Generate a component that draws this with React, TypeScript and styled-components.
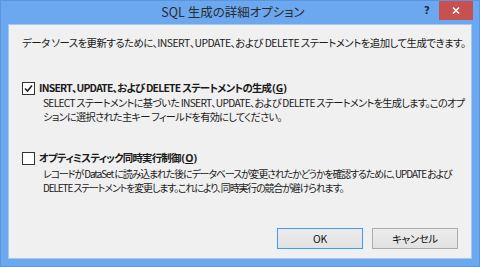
import React from "react";
import styled, { createGlobalStyle } from "styled-components";

const Global = createGlobalStyle`
  html, body { margin: 0; padding: 0; }
  body { background: #6aa7ee; }
`;

const FONT = `"Noto Sans CJK JP", "Noto Sans", sans-serif`;

const Frame = styled.div`
  width: 480px;
  height: 267px;
  box-sizing: border-box;
  background: #6ca8ef;
  border: 1px solid #5b95dc;
  display: flex;
  flex-direction: column;
  font-family: ${FONT};
  font-feature-settings: "palt";
  color: #1a1a1a;
`;

const TitleBar = styled.div`
  height: 23px;
  display: flex;
  align-items: flex-start;
  position: relative;
`;

const Title = styled.div`
  position: absolute;
  left: 0;
  right: 14px;
  top: 3px;
  text-align: center;
  font-size: 12.5px;
  line-height: 16px;
  color: #2b2b2b;
`;

const Controls = styled.div`
  margin-left: auto;
  display: flex;
  align-items: flex-start;
  margin-right: 6px;
  position: relative;
`;

const HelpButton = styled.div`
  width: 24px;
  height: 19px;
  display: flex;
  align-items: center;
  justify-content: center;
  font-family: "DejaVu Sans", sans-serif;
  font-weight: bold;
  font-size: 10px;
  color: #1c2a40;
`;

const CloseButton = styled.div`
  width: 34px;
  height: 19px;
  background: #c75050;
  display: flex;
  align-items: center;
  justify-content: center;
`;

const Client = styled.div`
  flex: 1;
  margin: 0 7px 7px 7px;
  background: #f0f0f0;
  border: 1px solid #a8c8f0;
  display: flex;
  flex-direction: column;
  padding: 10px 13px 9px 13px;
  font-size: 10.4px;
  letter-spacing: -0.5px;
`;

const Intro = styled.div`
  line-height: 16px;
  white-space: nowrap;
`;

const OptionRow = styled.label<{ $top: number }>`
  display: flex;
  align-items: center;
  gap: 4px;
  margin-top: ${(p) => p.$top}px;
  line-height: 16px;
  font-weight: bold;
  white-space: nowrap;
  letter-spacing: -0.75px;
`;

const Box = styled.span`
  width: 11px;
  height: 11px;
  border: 1px solid #333;
  background: #fff;
  display: inline-flex;
  align-items: center;
  justify-content: center;
  flex: none;
`;

const Accel = styled.span`
  font-family: "Noto Sans", sans-serif;
  letter-spacing: 0;
  margin-left: 1px;
`;

const Mnemonic = styled.span`
  text-decoration: underline;
`;

const Description = styled.div<{ $top: number; $spacing: number; $size: number }>`
  margin-top: ${(p) => p.$top}px;
  padding-left: 21px;
  line-height: 14px;
  white-space: nowrap;
  font-size: ${(p) => p.$size}px;
  letter-spacing: ${(p) => p.$spacing}px;
`;

const ButtonRow = styled.div`
  margin-top: auto;
  display: flex;
  justify-content: flex-end;
  gap: 9px;
`;

const Button = styled.button<{ $default?: boolean }>`
  width: 86px;
  height: 21px;
  box-sizing: border-box;
  font-family: ${FONT};
  font-feature-settings: "palt";
  font-size: 10.4px;
  letter-spacing: -0.3px;
  color: #111;
  background: linear-gradient(#ececec, #e2e2e2);
  border: 1px solid ${(p) => (p.$default ? "#3c9cf0" : "#acacac")};
  padding: 0;
`;

const Check = () => (
  <svg width="9" height="9" viewBox="0 0 9 9">
    <path d="M1 4.5 L3.5 7 L8 1.5" fill="none" stroke="#222" strokeWidth="1.6" />
  </svg>
);

export default function App() {
  return (
    <>
      <Global />
      <Frame>
        <TitleBar>
          <Title>SQL 生成の詳細オプション</Title>
          <Controls>
            <HelpButton>?</HelpButton>
            <CloseButton>
              <svg width="8" height="7" viewBox="0 0 8 7">
                <path d="M1 0.5 L7 6.5 M7 0.5 L1 6.5" stroke="#fff" strokeWidth="1.5" />
              </svg>
            </CloseButton>
          </Controls>
        </TitleBar>
        <Client>
          <Intro>
            データ ソースを更新するために、INSERT、UPDATE、および DELETE ステートメントを追加して生成できます。
          </Intro>
          <OptionRow $top={29}>
            <Box>
              <Check />
            </Box>
            <span>
              INSERT、UPDATE、および DELETE ステートメントの生成
              <Accel>
                (<Mnemonic>G</Mnemonic>)
              </Accel>
            </span>
          </OptionRow>
          <Description $top={0} $spacing={-0.7} $size={10.2}>
            SELECT ステートメントに基づいた INSERT、UPDATE、および DELETE ステートメントを生成します。このオプ
            <br />
            ションに選択された主キー フィールドを有効にしてください。
          </Description>
          <OptionRow $top={26}>
            <Box />
            <span>
              オプティミスティック同時実行制御
              <Accel>
                (<Mnemonic>O</Mnemonic>)
              </Accel>
            </span>
          </OptionRow>
          <Description $top={1} $spacing={-1.05} $size={9.9}>
            レコードが DataSet に読み込まれた後にデータベースが変更されたかどうかを確認するために、UPDATE および
            <br />
            DELETE ステートメントを変更します。これにより、同時実行の競合が避けられます。
          </Description>
          <ButtonRow>
            <Button $default>OK</Button>
            <Button>キャンセル</Button>
          </ButtonRow>
        </Client>
      </Frame>
    </>
  );
}
